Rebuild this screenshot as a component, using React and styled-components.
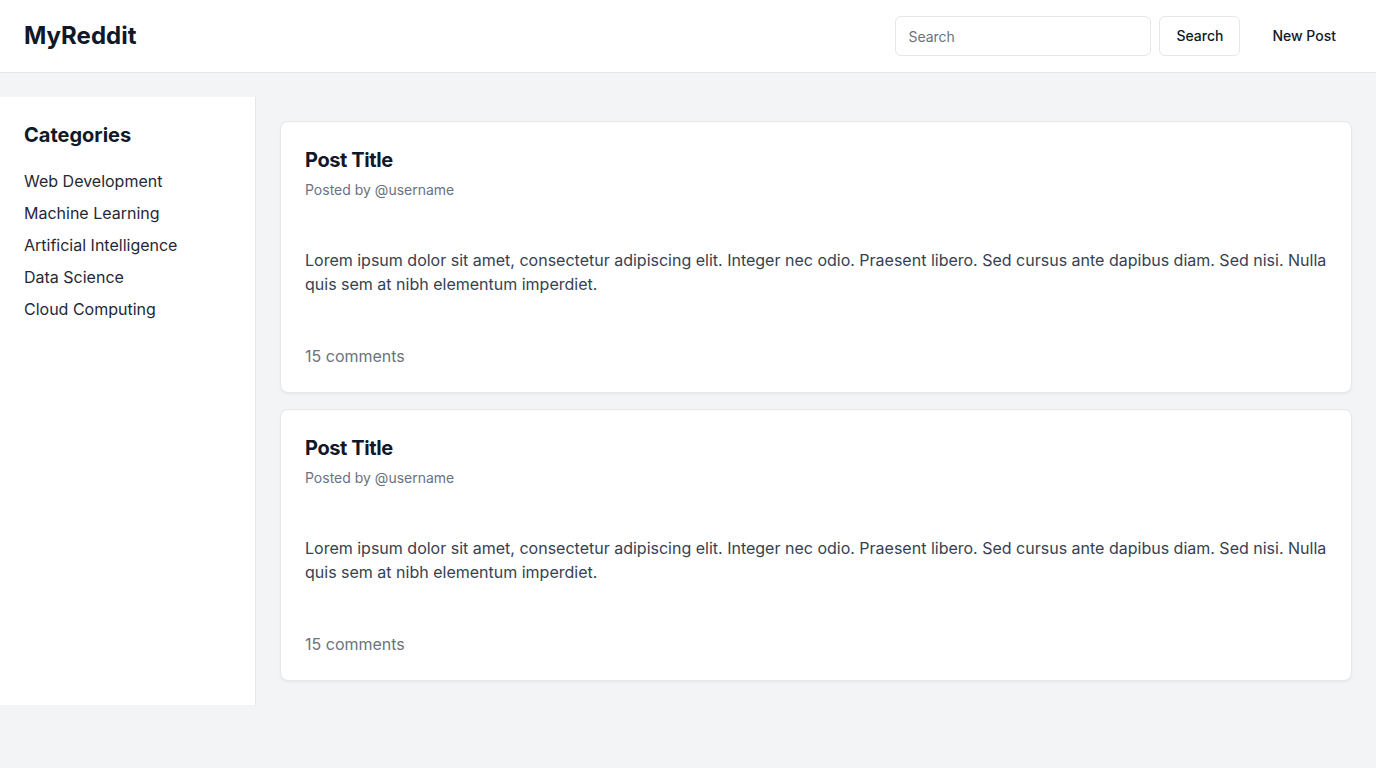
import React from 'react'
import styled, { createGlobalStyle } from 'styled-components'

const GlobalStyle = createGlobalStyle`
  * { box-sizing: border-box; }
  body {
    margin: 0;
    font-family: Inter, "Noto Sans", sans-serif;
    background: #f3f4f6;
    color: #111827;
  }
`

const Header = styled.header`
  height: 73px;
  display: flex;
  align-items: center;
  justify-content: space-between;
  padding: 0 24px;
  background: #fff;
  border-bottom: 1px solid #e5e7eb;
`

const Logo = styled.h1`
  margin: 0;
  font-size: 24px;
  line-height: 32px;
  font-weight: 700;
  color: #111827;
`

const Actions = styled.div`
  display: flex;
  align-items: center;
  gap: 16px;
`

const SearchForm = styled.form`
  display: flex;
  align-items: center;
  gap: 8px;
`

const SearchInput = styled.input`
  width: 256px;
  height: 40px;
  padding: 0 12px;
  border: 1px solid #e5e7eb;
  border-radius: 6px;
  font-family: inherit;
  font-size: 14px;
  color: #111827;
  outline: none;
  &::placeholder { color: #6b7280; }
`

const Button = styled.button`
  height: 40px;
  padding: 0 ${p => (p.$ghost ? '15px' : '16px')} 1px;
  border: 1px solid ${p => (p.$ghost ? 'transparent' : '#e5e7eb')};
  border-radius: 6px;
  background: #fff;
  font-family: inherit;
  font-size: 14px;
  font-weight: 500;
  color: #111827;
  cursor: pointer;
`

const Layout = styled.div`
  display: flex;
  padding-top: 24px;
`

const Sidebar = styled.aside`
  width: 256px;
  flex-shrink: 0;
  background: #fff;
  border-right: 1px solid #e5e7eb;
  padding: 24px;
`

const SideTitle = styled.h2`
  margin: 0 0 16px;
  font-size: 20px;
  line-height: 28px;
  font-weight: 700;
  color: #111827;
`

const CatList = styled.ul`
  list-style: none;
  margin: 0;
  padding: 0;
`

const CatItem = styled.li`
  padding: 4px 0;
  font-size: 16px;
  line-height: 24px;
  color: #1f2937;
`

const Feed = styled.main`
  flex: 1;
  padding: 24px;
  display: flex;
  flex-direction: column;
  gap: 16px;
`

const Card = styled.article`
  background: #fff;
  border: 1px solid #e5e7eb;
  border-radius: 8px;
  box-shadow: 0 1px 2px rgba(0, 0, 0, 0.05);
`

const CardSection = styled.div`
  padding: 24px;
  display: flex;
  flex-direction: column;
  gap: 6px;
`

const PostTitle = styled.h3`
  margin: 0;
  font-size: 20px;
  line-height: 28px;
  font-weight: 700;
  letter-spacing: -0.02em;
  color: #111827;
`

const Meta = styled.p`
  margin: 0;
  font-size: 14px;
  line-height: 20px;
  color: #6b7280;
`

const Body = styled.p`
  margin: 0;
  font-size: 16px;
  line-height: 24px;
  color: #374151;
`

const Comments = styled.span`
  font-size: 16px;
  line-height: 24px;
  color: #6b7280;
`

const categories = [
  'Web Development',
  'Machine Learning',
  'Artificial Intelligence',
  'Data Science',
  'Cloud Computing',
]

const lorem =
  'Lorem ipsum dolor sit amet, consectetur adipiscing elit. Integer nec odio. Praesent libero. Sed cursus ante dapibus diam. Sed nisi. Nulla quis sem at nibh elementum imperdiet.'

const Post = () =>
  <Card>
    <CardSection>
      <PostTitle>Post Title</PostTitle>
      <Meta>Posted by @username</Meta>
    </CardSection>
    <CardSection>
      <Body>{lorem}</Body>
    </CardSection>
    <CardSection>
      <Comments>15 comments</Comments>
    </CardSection>
  </Card>

const App = () =>
  <>
    <GlobalStyle />
    <Header>
      <Logo>MyReddit</Logo>
      <Actions>
        <SearchForm onSubmit={e => e.preventDefault()}>
          <SearchInput placeholder="Search" />
          <Button type="submit">Search</Button>
        </SearchForm>
        <Button $ghost>New Post</Button>
      </Actions>
    </Header>
    <Layout>
      <Sidebar>
        <SideTitle>Categories</SideTitle>
        <CatList>
          {categories.map(c => <CatItem key={c}>{c}</CatItem>)}
        </CatList>
      </Sidebar>
      <Feed>
        <Post />
        <Post />
      </Feed>
    </Layout>
  </>

export default App
